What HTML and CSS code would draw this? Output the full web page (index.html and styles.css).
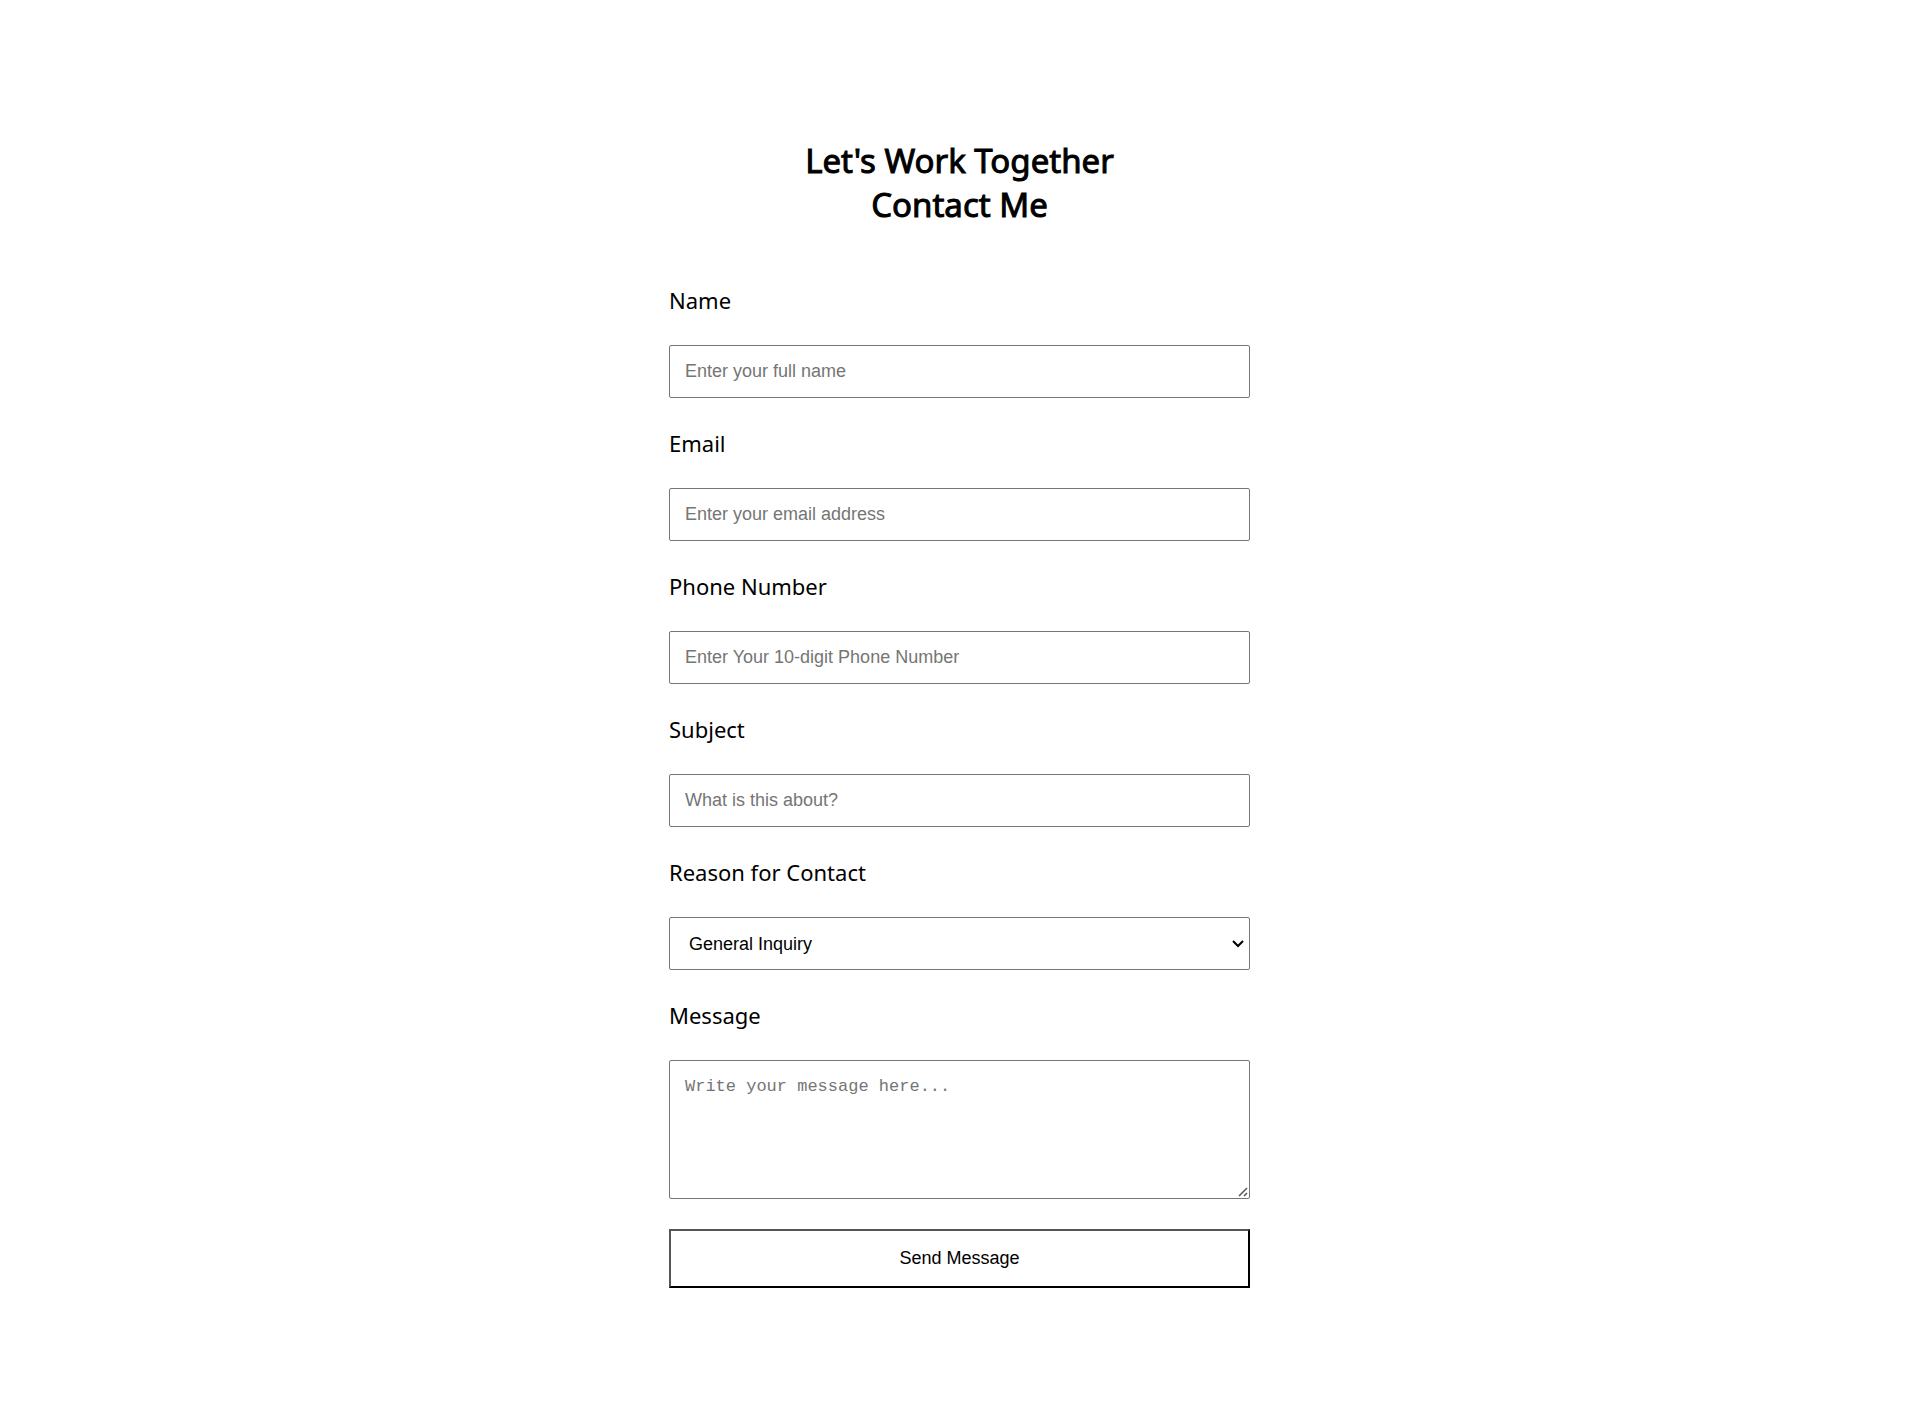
FILE: index.html
```html
<!DOCTYPE html>
<html lang="en">
<head>
<meta charset="utf-8">
<meta name="viewport" content="width=device-width, initial-scale=1">
<title>Contact Me</title>
<link rel="stylesheet" href="styles.css">
</head>
<body>
<main class="contact">
  <h1 class="contact-title">Let's Work Together<br>Contact Me</h1>
  <form class="contact-form">
    <label class="field-label" for="name">Name</label>
    <input class="field" type="text" id="name" name="name" placeholder="Enter your full name">
    <label class="field-label" for="email">Email</label>
    <input class="field" type="email" id="email" name="email" placeholder="Enter your email address">
    <label class="field-label" for="phone">Phone Number</label>
    <input class="field" type="tel" id="phone" name="phone" placeholder="Enter Your 10-digit Phone Number">
    <label class="field-label" for="subject">Subject</label>
    <input class="field" type="text" id="subject" name="subject" placeholder="What is this about?">
    <label class="field-label" for="reason">Reason for Contact</label>
    <select class="field reason" id="reason" name="reason">
      <option>General Inquiry</option>
    </select>
    <label class="field-label" for="message">Message</label>
    <textarea class="field message" id="message" name="message" rows="5" placeholder="Write your message here..."></textarea>
    <button class="send" type="submit">Send Message</button>
  </form>
</main>
</body>
</html>
```

FILE: styles.css
```css
* {
  box-sizing: border-box;
}

body {
  margin: 0;
  background: #fff;
  color: #000;
  font-family: "Noto Sans", sans-serif;
}

.contact {
  max-width: 581px;
  margin: 0 auto;
  padding: 139px 0 133px;
}

.contact-title {
  margin: 0 0 58px;
  font-size: 33px;
  font-weight: 400;
  line-height: 44px;
  text-align: center;
  -webkit-text-stroke: 1px #000;
}

.contact-form {
  display: flex;
  flex-direction: column;
  gap: 30px;
}

.field-label {
  font-size: 22px;
  line-height: 30px;
}

.field {
  width: 100%;
  height: 53px;
  padding: 15px;
  border: 1px solid #767676;
  border-radius: 2px;
  background: #fff;
  color: #000;
  font-family: "Liberation Sans", Arial, sans-serif;
  font-size: 18px;
}

.reason {
  appearance: none;
  padding: 0 19px;
  background: #fff url("data:image/svg+xml,%3Csvg xmlns='http://www.w3.org/2000/svg' width='14' height='9'%3E%3Cpath d='M2 2L7 7L12 2' fill='none' stroke='%23000' stroke-width='2'/%3E%3C/svg%3E") no-repeat right 4px center;
}

.message {
  height: 139px;
  font-family: "Liberation Mono", monospace;
  font-size: 17px;
  line-height: 22px;
}

.message::-webkit-resizer {
  background: url("data:image/svg+xml,%3Csvg xmlns='http://www.w3.org/2000/svg' width='12' height='12'%3E%3Cpath d='M2 10L10 2M7 10L10 7' fill='none' stroke='%23555' stroke-width='1.5'/%3E%3C/svg%3E") no-repeat right bottom;
}

.send {
  height: 59px;
  border: 2px solid;
  border-color: #555 #000 #000 #555;
  background: #fff;
  color: #000;
  font-family: "Liberation Sans", Arial, sans-serif;
  font-size: 18px;
}
```
